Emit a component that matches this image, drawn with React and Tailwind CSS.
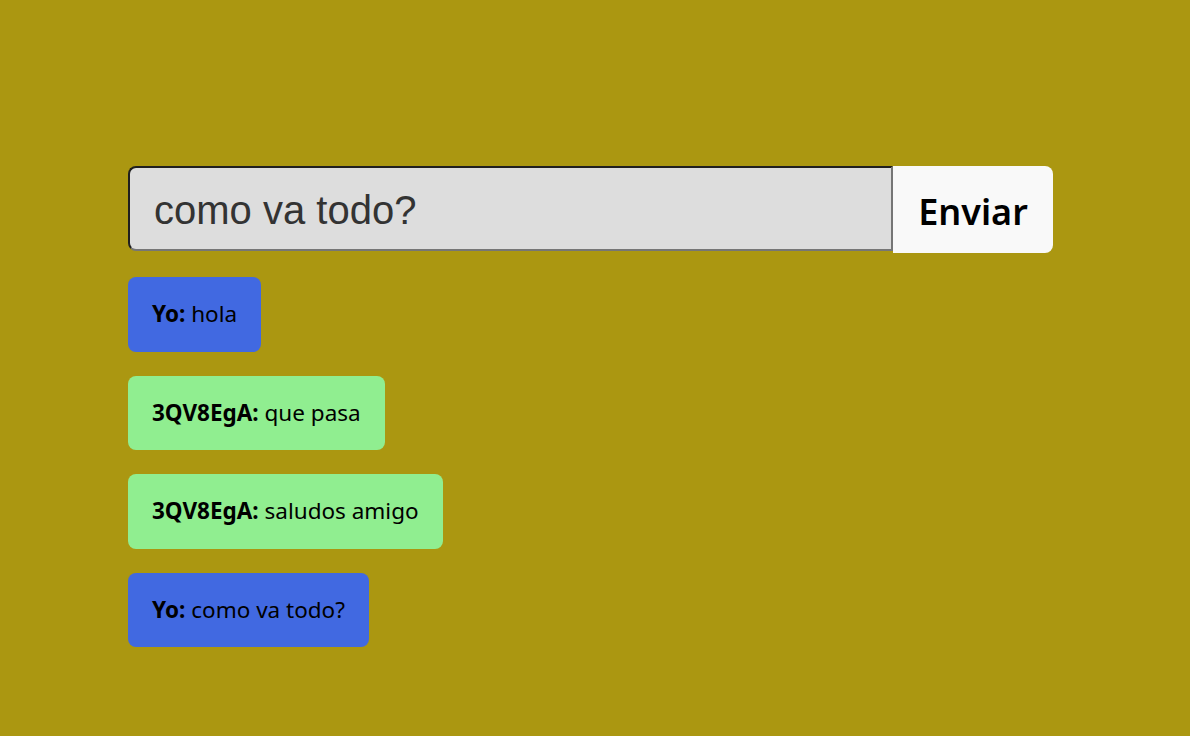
import React, { useState } from "react";

const messages = [
  { from: "Yo", text: "hola", mine: true },
  { from: "3QV8EgA", text: "que pasa", mine: false },
  { from: "3QV8EgA", text: "saludos amigo", mine: false },
  { from: "Yo", text: "como va todo?", mine: true },
];

export default function App() {
  const [msg, setMsg] = useState("como va todo?");

  return (
    <div className="min-h-screen w-full bg-[#ab9711] pt-[166px] pl-[128px]" style={{ fontFamily: '"Noto Sans", "Open Sans", sans-serif' }}>
      <form className="flex w-[925px]" onSubmit={(e) => e.preventDefault()}>
        <input
          type="text"
          value={msg}
          onChange={(e) => setMsg(e.target.value)}
          className="h-[85px] flex-1 rounded-l-lg border-2 border-t-[#1f1f1f] border-l-[#1f1f1f] border-b-[#767676] border-r-[#767676] bg-[#dddddd] px-6 pt-1 text-[40px] text-[#333] outline-none"
          style={{ fontFamily: '"Liberation Sans", Arial, sans-serif' }}
        />
        <button type="submit" className="h-[87px] w-[160px] rounded-r-lg bg-[#f9f9f9] pt-1 text-[36px] font-semibold text-black">
          Enviar
        </button>
      </form>

      <div className="mt-6 flex flex-col items-start gap-6">
        {messages.map((m, i) => (
          <div
            key={i}
            className={"rounded-lg px-6 py-6 text-[22.5px] leading-[26.5px] text-black " + (m.mine ? "bg-[#4169e1]" : "bg-[#90ee90]")}
          >
            <b>{m.from}:</b> {m.text}
          </div>
        ))}
      </div>
    </div>
  );
}
